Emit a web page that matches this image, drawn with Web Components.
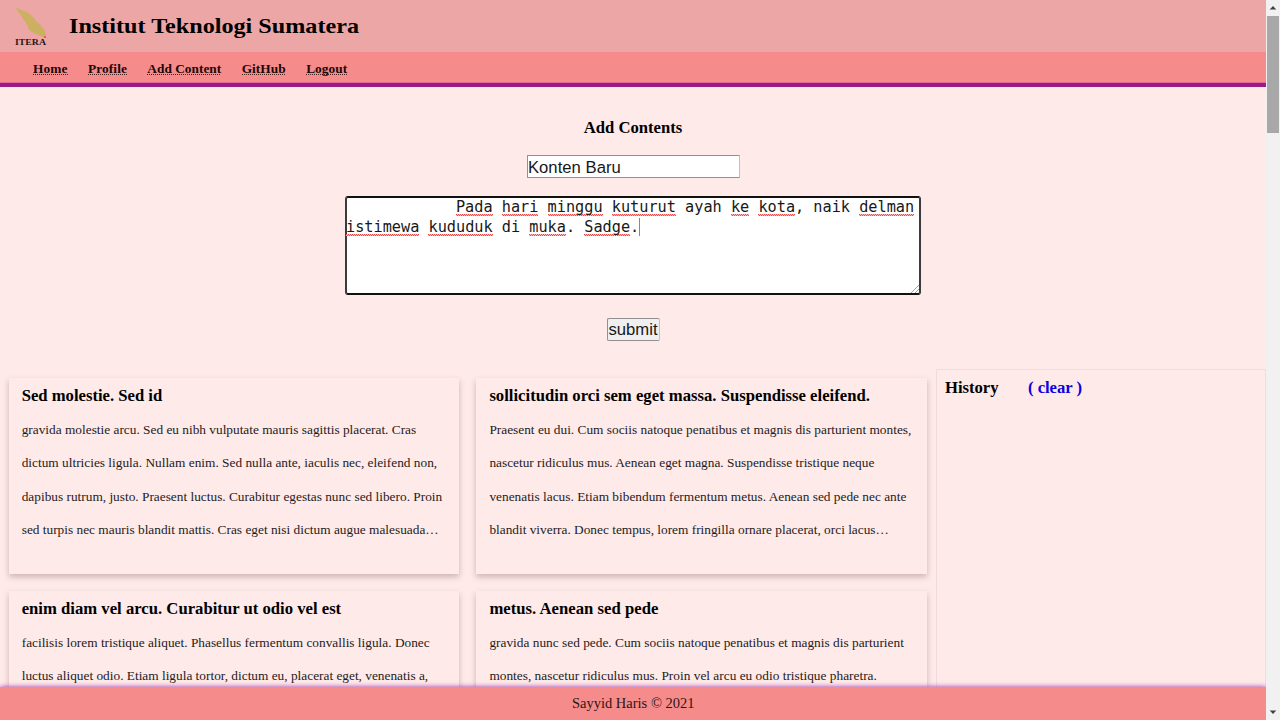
<!DOCTYPE html>
<html lang="id"><head><meta charset="utf-8"><title>Institut Teknologi Sumatera</title>
<style>html,body{margin:0;height:720px;overflow:hidden}body{font-family:"Liberation Serif",serif;color:#000}</style></head>
<body><itera-app></itera-app>
<script>
const mount=(el,css,html)=>{el.attachShadow({mode:'open'}).innerHTML='<style>'+css+'</style>'+html;};
/* One line of text that spans the requested width, by tracking or, with "stretch", by widening its letters. */
class FitText extends HTMLElement{connectedCallback(){
 mount(this,':host{display:block;white-space:pre}span{display:inline-block;white-space:pre;transform-origin:0 50%}','<span><slot></slot></span>');
 const s=this.shadowRoot.querySelector('span'),w=+this.getAttribute('w'),n=this.textContent.length,r=s.getBoundingClientRect().width;
 if(this.hasAttribute('stretch')){s.style.transform=`scaleX(${w/r})`;this.style.width=w+'px';}
 else if(w)s.style.letterSpacing=((w-r)/n)+'px';}}
class SiteHeader extends HTMLElement{connectedCallback(){mount(this,`
:host{display:flex;align-items:center;height:52px;background:#eda6a6}
svg{width:34px;height:41px;margin:1px 0 0 14px;flex:none}
h1{margin:0 0 0 21px;height:52px;font:bold 21.8px/53px "Liberation Serif",serif}`,
`<svg viewBox="0 0 34 41"><defs><pattern id="p" width="2" height="2" patternUnits="userSpaceOnUse"><rect width="2" height="2" fill="#cbb062"/><path d="M0 2L2 0" stroke="#dda47b" stroke-width=".6"/></pattern></defs><path d="M1.5 1L7 4L10 5L13 6L17 9L20 12L22 15L26 18L28 21L31 25L32 29L30 31L26 30L22 28L18 26L15 24L14 21L12 17L9 13L7 9L4 6Z" fill="url(#p)"/><circle cx="31" cy="31" r="1.1" fill="#e94b45"/><text x="1" y="39.3" textLength="31" lengthAdjust="spacingAndGlyphs" font-family="Liberation Serif,serif" font-weight="bold" font-size="8.6" fill="#251719">ITERA</text></svg><h1><fit-text stretch w="290">Institut Teknologi Sumatera</fit-text></h1>`)}}
class SiteNav extends HTMLElement{connectedCallback(){mount(this,`
:host{display:flex;box-sizing:border-box;height:35px;padding-left:33px;gap:20.4px;background:#f58b8a;border-bottom:4px solid #9c1a83;box-shadow:inset 0 -1px #e36a9a;position:relative}
a{font:bold 13.33px/34px "Liberation Serif",serif;color:#1c0808}
fit-text{height:23px;background:repeating-linear-gradient(90deg,#4d2020 0 1px,transparent 1px 2px) 0 22px/100% 1px no-repeat}`,
[['Home',34.7],['Profile',38.9],['Add Content',73.9],['GitHub',44.1],['Logout',41]].map(([t,w])=>`<a><fit-text w="${w}">${t}</fit-text></a>`).join(''))}}
class ContentForm extends HTMLElement{connectedCallback(){mount(this,`
:host{display:flex;flex-direction:column;align-items:center;height:282px;box-sizing:border-box;padding-top:30px}
h3{margin:0;font:bold 16.67px/21px "Liberation Serif",serif}
.title{box-sizing:border-box;width:213px;height:23px;margin-top:17px;border:1px solid #929090;border-right-color:#c5bebe;border-radius:1px;background:#fff;padding-left:.4px;font:16.67px/23px "Liberation Sans",sans-serif;color:#181818}
.area{position:relative;box-sizing:border-box;width:576px;height:99px;margin-top:18px;border:2px solid #111;border-left-color:#3b3b3b;border-right-color:#3b3b3b;border-radius:3px;background:#fff;font:15.22px/19px "DejaVu Sans Mono",monospace;color:#181818}
.area div{white-space:pre;height:19.5px;margin-left:-1px}
u{text-decoration:none;display:inline-block;height:19.5px;background:repeating-linear-gradient(90deg,#ee4d4d 0 1px,#ffb8b8 1px 2px) 0 16px/100% 1px no-repeat,repeating-linear-gradient(90deg,#ffb8b8 0 1px,#ee4d4d 1px 2px) 0 17px/100% 1px no-repeat}
i{display:inline-block;width:1px;height:18px;background:#888;vertical-align:top}
svg{position:absolute;right:0;bottom:0;width:8px;height:8px}
.btn{box-sizing:border-box;width:53px;height:23px;margin-top:23px;border:1px solid #929090;border-right-color:#c5bebe;border-radius:2px;background:#efefef;font:16.67px/21px "Liberation Sans",sans-serif;padding-left:1px;color:#181818}`,
`<h3><fit-text w="98.5">Add Contents</fit-text></h3><div class="title"><fit-text w="93">Konten Baru</fit-text></div>
<div class="area"><div>            <u>Pada</u> <u>hari</u> <u>minggu</u> <u>kuturut</u> ayah <u>ke</u> <u>kota</u>, naik <u>delman</u></div><div><u>istimewa</u> <u>kududuk</u> di <u>muka</u>. <u>Sadge</u>.<i></i></div><svg viewBox="0 0 8 8"><path d="M0 8L8 0M4 8L8 4" stroke="#888" fill="none" stroke-width=".8"/></svg></div>
<div class="btn"><fit-text w="49">submit</fit-text></div>`)}}
class ContentCard extends HTMLElement{connectedCallback(){mount(this,`
:host{display:block;box-sizing:border-box;height:196px;padding:8px 0 0 13px;background:#feeae9;box-shadow:0 2.5px 6px rgba(70,25,35,.26)}
::slotted(h3){margin:0 0 6.9px!important;font:bold 16.67px/20px "Liberation Serif",serif!important}
::slotted(p){margin:0!important;font:13.333px/33.4px "Liberation Serif",serif!important;color:#251b1b}`,'<slot></slot>')}}
class HistoryPanel extends HTMLElement{connectedCallback(){mount(this,`
:host{display:flex;gap:29.5px;box-sizing:border-box;border:1px solid #f0dbdd;padding:7px 0 0 8px;font:bold 16.67px/22px "Liberation Serif",serif}
a{color:#0a00e0}`,`<fit-text w="53.5">History</fit-text><a><fit-text w="54">( clear )</fit-text></a>`)}}
class ScrollBar extends HTMLElement{connectedCallback(){mount(this,`
:host{display:flex;flex-direction:column;align-items:center;background:#f1f1f1}
svg{width:14px;height:16px;flex:none}b{width:11.5px;height:117px;background:#a8a8a8}span{flex:1}`,
`<svg><path d="M3.7 9.5L7 6L10.3 9.5Z" fill="#404040"/></svg><b></b><span></span><svg><path d="M3.7 6.5L7 10L10.3 6.5Z" fill="#404040"/></svg>`)}}
class SiteFooter extends HTMLElement{connectedCallback(){mount(this,`
:host{display:flex;justify-content:center;height:33.5px;background:#f58b8a;box-shadow:0 0 5px #a431a8;font:13.9px/33px "Liberation Serif",serif;color:#301515}`,
`<fit-text stretch w="122.5">Sayyid Haris © 2021</fit-text>`)}}
const cards=[
['Sed molestie. Sed id',140.5,['gravida molestie arcu. Sed eu nibh vulputate mauris sagittis placerat. Cras',394.5],['dictum ultricies ligula. Nullam enim. Sed nulla ante, iaculis nec, eleifend non,',415.5],['dapibus rutrum, justo. Praesent luctus. Curabitur egestas nunc sed libero. Proin',420.5],['sed turpis nec mauris blandit mattis. Cras eget nisi dictum augue malesuada…',417]],
['sollicitudin orci sem eget massa. Suspendisse eleifend.',380.5,['Praesent eu dui. Cum sociis natoque penatibus et magnis dis parturient montes,',422],['nascetur ridiculus mus. Aenean eget magna. Suspendisse tristique neque',385],['venenatis lacus. Etiam bibendum fermentum metus. Aenean sed pede nec ante',417],['blandit viverra. Donec tempus, lorem fringilla ornare placerat, orci lacus…',399.5]],
['enim diam vel arcu. Curabitur ut odio vel est',319.5,['facilisis lorem tristique aliquet. Phasellus fermentum convallis ligula. Donec',408],['luctus aliquet odio. Etiam ligula tortor, dictum eu, placerat eget, venenatis a,',406.5]],
['metus. Aenean sed pede',169,['gravida nunc sed pede. Cum sociis natoque penatibus et magnis dis parturient',414.5],['montes, nascetur ridiculus mus. Proin vel arcu eu odio tristique pharetra.',387.5]]];
class ContentGrid extends HTMLElement{connectedCallback(){mount(this,`
:host{display:grid;grid-template-columns:450.5px 451px;column-gap:17.2px;row-gap:17px;padding:9px 0 0 8.7px;align-content:start}`,
cards.map(([t,w,...ls])=>`<content-card><h3><fit-text w="${w}">${t}</fit-text></h3>${ls.map(([l,x])=>`<p><fit-text w="${x}">${l}</fit-text></p>`).join('')}</content-card>`).join(''))}}
class IteraApp extends HTMLElement{connectedCallback(){mount(this,`
:host{display:grid;grid-template-columns:1266px 14px;height:720px;background:#feeae9}
.page{display:flex;flex-direction:column;height:720px;overflow:hidden}
.main{flex:1;min-height:0;overflow:hidden;display:grid;grid-template-columns:936px 330px;grid-template-rows:400px}
site-footer{flex:none;position:relative}site-header,site-nav,content-form{flex:none}`,
`<div class="page"><site-header></site-header><site-nav></site-nav><content-form></content-form><div class="main"><content-grid></content-grid><history-panel></history-panel></div><site-footer></site-footer></div><scroll-bar></scroll-bar>`)}}
for(const [n,c] of Object.entries({'fit-text':FitText,'site-header':SiteHeader,'site-nav':SiteNav,'content-form':ContentForm,'content-card':ContentCard,'history-panel':HistoryPanel,'scroll-bar':ScrollBar,'site-footer':SiteFooter,'content-grid':ContentGrid,'itera-app':IteraApp}))customElements.define(n,c);
</script></body></html>
